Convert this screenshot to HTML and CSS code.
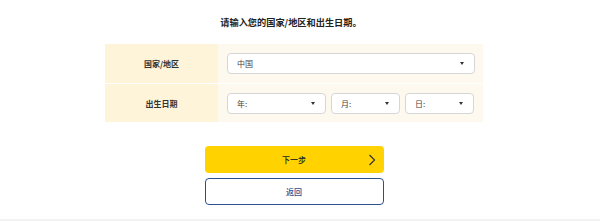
FILE: index.html
```html
<!DOCTYPE html>
<html lang="zh">
<head>
  <meta charset="UTF-8">
  <meta name="viewport" content="width=device-width, initial-scale=1.0">
  <title>出生日期</title>
  <link rel="stylesheet" href="styles.css">
</head>
<body>
  <div id="wrap">
    <p class="lead">请输入您的国家/地区和出生日期。</p>
    <div class="form">
      <div class="row">
        <div class="label">国家/地区</div>
        <div class="field">
          <div class="select full"><span>中国</span><i class="arrow"></i></div>
        </div>
      </div>
      <div class="row">
        <div class="label">出生日期</div>
        <div class="field">
          <div class="select year"><span>年:</span><i class="arrow"></i></div>
          <div class="select small"><span>月:</span><i class="arrow"></i></div>
          <div class="select small"><span>日:</span><i class="arrow"></i></div>
        </div>
      </div>
    </div>
    <div class="btns">
      <div class="btn next">下一步
        <svg class="chev" width="8" height="12" viewBox="0 0 8 12"><path d="M1.5 1 L6.5 6 L1.5 11" fill="none" stroke="#333" stroke-width="1.2"/></svg>
      </div>
      <div class="btn back">返回</div>
    </div>
  </div>
  <div class="foot"></div>
</body>
</html>
```

FILE: styles.css
```css
* { margin: 0; padding: 0; box-sizing: border-box; }
body {
  width: 600px;
  height: 221px;
  overflow: hidden;
  background: #fff;
  font-family: "Noto Sans CJK SC", "Noto Sans", sans-serif;
  color: #333;
  position: relative;
}
#wrap {
  width: 378px;
  margin-left: 105px;
}
.lead {
  padding-top: 16px;
  line-height: 12px;
  font-size: 9.2px;
  font-weight: bold;
  color: #222;
  text-align: center;
  margin-left: -6px;
}
.form {
  margin-top: 16px;
}
.row {
  display: flex;
  height: 39px;
}
.row + .row {
  border-top: 1px solid #fff;
}
.label {
  width: 113px;
  background: #fdf4d9;
  display: flex;
  align-items: center;
  justify-content: center;
  font-size: 8px;
  font-weight: bold;
  color: #333;
}
.field {
  flex: 1;
  background: #fdf9ee;
  display: flex;
  align-items: center;
  gap: 5px;
  padding: 0 8px 0 9px;
}
.select {
  height: 21px;
  background: #fff;
  border: 1px solid #d6d6d6;
  border-radius: 4px;
  display: flex;
  align-items: center;
  justify-content: space-between;
  padding: 0 10px 0 9px;
  font-size: 8px;
  color: #444;
}
.select.full { flex: 1; }
.select.year { width: 99px; }
.select.small { width: 69px; }
.arrow {
  width: 0;
  height: 0;
  border-left: 2.5px solid transparent;
  border-right: 2.5px solid transparent;
  border-top: 3px solid #333;
}
.btns {
  margin-top: 24px;
  display: flex;
  flex-direction: column;
  align-items: center;
  gap: 5px;
}
.btn {
  width: 179px;
  height: 27px;
  border-radius: 4px;
  display: flex;
  align-items: center;
  justify-content: center;
  font-size: 8px;
  font-weight: 500;
  position: relative;
}
.next {
  background: #ffd200;
  color: #222;
}
.chev {
  position: absolute;
  right: 8px;
  top: 8px;
}
.back {
  background: #fff;
  border: 1.5px solid #2c4f8f;
  color: #2c4f8f;
}
.foot {
  position: absolute;
  left: 0;
  right: 0;
  bottom: 0;
  height: 2px;
  background: #f2f2f2;
}
```
